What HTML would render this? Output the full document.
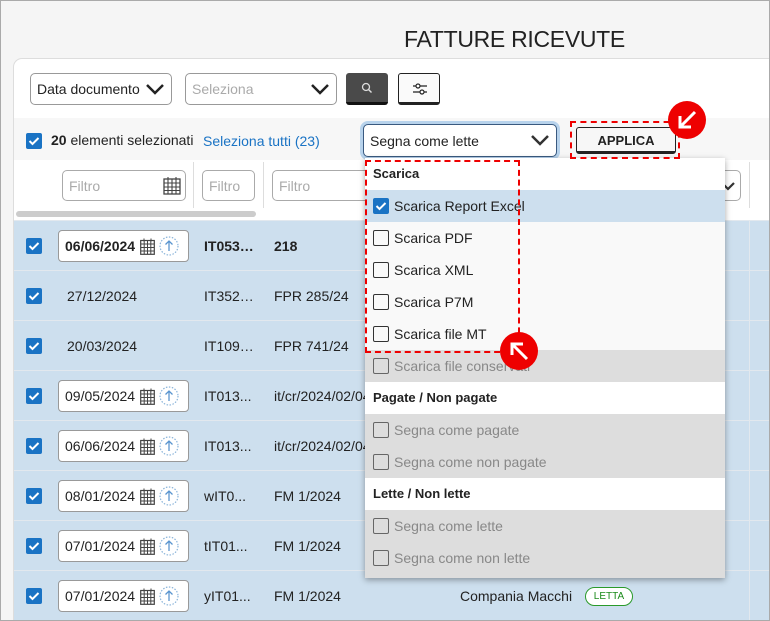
<!DOCTYPE html>
<html style="width:770px;height:621px;overflow:hidden"><head><meta charset="utf-8"><style>
*{box-sizing:border-box;margin:0;padding:0}
body{width:770px;height:621px;overflow:hidden;background:#f5f5f5;font-family:"Liberation Sans",Arial,sans-serif;position:relative;color:#222}
.frame{position:absolute;left:0;top:0;width:770px;height:621px;border:1px solid #aaa;pointer-events:none;z-index:50}
.abs{position:absolute}
.title{left:404px;top:26px;font-size:23px;color:#222;letter-spacing:-0.3px;font-family:"Liberation Sans Narrow","Liberation Sans",sans-serif}
.panel{left:13px;top:58px;width:757px;height:562px;background:#fff;border:1px solid #ddd;border-right:none;border-bottom:none;border-radius:9px 0 0 0;overflow:hidden}
.sel{border:1px solid #999;border-radius:5px;background:#fff;height:32px;font-size:14px;display:flex;align-items:center;padding-left:6px}
.chev{position:absolute;right:6px;top:8px}
.cb{position:absolute;width:16px;height:16px;background:#1a73c4;border-radius:2px}
.cb svg{position:absolute;left:2px;top:3px}
.ub{position:absolute;width:16px;height:16px;border:1.6px solid #333;border-radius:2px;background:transparent}
.row{position:absolute;left:14px;width:756px;height:50px;background:#cddfee;border-top:1px solid #e2e8ee}
.dbox{position:absolute;left:44px;top:9px;width:131px;height:32px;background:#fff;border:1px solid #999;border-radius:4px;font-size:14px;padding:7px 0 0 6px}
.t{position:absolute;font-size:14px;top:17px}
.menu{left:365px;top:158px;width:360px;height:420px;background:#f9f9f9;box-shadow:0 2px 6px rgba(0,0,0,.35);z-index:10}
.mi{position:absolute;left:0;width:360px;height:32px;font-size:14px}
.mi span{position:absolute;left:29px;top:8px}
.mi .ub,.mi .cb{left:8px;top:8px}
.hd{background:#fff;font-weight:bold;font-size:13px}
.hd span{left:8px}
.dis{background:#dddddd;color:#888}
.dis .ub{border-color:#666}
.red{position:absolute;border:2.5px dashed #e00;z-index:20}
.circ{position:absolute;width:38px;height:38px;border-radius:50%;background:#e00;z-index:21}
</style></head><body>
<div class="frame"></div>
<div class="abs title">FATTURE RICEVUTE</div>
<div class="abs panel"></div>
<div class="abs sel" style="left:30px;top:73px;width:142px">Data documento<svg class="chev" width="20" height="14" viewBox="0 0 20 14"><path d="M2 3l8 8 8-8" fill="none" stroke="#222" stroke-width="2.5"/></svg></div>
<div class="abs sel" style="left:185px;top:73px;width:152px;color:#aaa">Seleziona<svg class="chev" width="20" height="14" viewBox="0 0 20 14"><path d="M2 3l8 8 8-8" fill="none" stroke="#222" stroke-width="2.5"/></svg></div>
<div class="abs" style="left:346px;top:73px;width:42px;height:32px;background:#4a4a4a;border-radius:3px;border-bottom:3px solid #111"><svg style="position:absolute;left:15px;top:9px" width="12" height="12" viewBox="0 0 12 12"><circle cx="5" cy="5" r="3.5" fill="none" stroke="#ddd" stroke-width="1.3"/><path d="M7.5 7.5l3 3" stroke="#ddd" stroke-width="1.4"/></svg></div>
<div class="abs" style="left:398px;top:73px;width:42px;height:32px;background:#fafafa;border:1px solid #222;border-radius:3px;border-bottom:3px solid #222"><svg style="position:absolute;left:13px;top:6px" width="16" height="18" viewBox="0 0 16 18"><path d="M1 6h14M1 12h14" stroke="#222" stroke-width="1.2"/><rect x="4" y="4" width="4" height="4" rx="2" fill="#fff" stroke="#222" stroke-width="1.2"/><rect x="8" y="10" width="4" height="4" rx="2" fill="#fff" stroke="#222" stroke-width="1.2"/></svg></div>
<div class="abs" style="left:14px;top:118px;width:756px;height:42px;background:#f7f7f7"></div>
<div class="cb" style="left:26px;top:133px"><svg width="12" height="10" viewBox="0 0 12 10"><path d="M1.5 5l3 3 6-6" fill="none" stroke="#fff" stroke-width="2"/></svg></div>
<div class="abs" style="left:51px;top:132px;font-size:14px"><b>20</b> elementi selezionati</div>
<div class="abs" style="left:203px;top:133px;font-size:14px;color:#1a73c4">Seleziona tutti (23)</div>
<div class="abs sel" style="left:363px;top:124px;width:194px;height:33px;border-color:#3a5a80;box-shadow:0 0 0 3px #b8d3ec">Segna come lette<svg class="chev" width="20" height="14" viewBox="0 0 20 14"><path d="M2 3l8 8 8-8" fill="none" stroke="#333" stroke-width="2.5"/></svg></div>
<div class="abs" style="left:576px;top:127px;width:100px;height:27px;background:#f7f7f7;border:1px solid #222;border-bottom:3px solid #222;border-radius:3px;font-size:13px;font-weight:bold;text-align:center;padding-top:5px">APPLICA</div>
<div class="abs" style="left:14px;top:160px;width:756px;height:60px;background:#fff"></div>
<div class="abs sel" style="left:62px;top:170px;width:124px;height:31px;color:#aaa;border-color:#aaa">Filtro<svg style="position:absolute;right:4px;top:5px" width="18" height="19" viewBox="0 0 18 19"><rect x="1" y="3" width="16" height="15" fill="none" stroke="#444" stroke-width="1.3"/><path d="M1 7h16M1 11h16M1 14.5h16M5 3v15M9 3v15M13 3v15M5 1v3M13 1v3" stroke="#444" stroke-width="1.1"/></svg></div>
<div class="abs" style="left:193px;top:162px;width:1px;height:46px;background:#ddd"></div>
<div class="abs sel" style="left:202px;top:170px;width:53px;height:31px;color:#aaa;border-color:#aaa">Filtro</div>
<div class="abs" style="left:263px;top:162px;width:1px;height:46px;background:#ddd"></div>
<div class="abs sel" style="left:272px;top:170px;width:100px;height:31px;color:#aaa;border-color:#aaa">Filtro</div>
<div class="abs" style="left:720px;top:170px;width:21px;height:31px;border:1px solid #aaa;border-left:none;border-radius:0 5px 5px 0"><svg style="position:absolute;left:0;top:9px" width="16" height="12" viewBox="0 0 16 12"><path d="M2 3l6 6 6-6" fill="none" stroke="#333" stroke-width="2.2"/></svg></div>
<div class="abs" style="left:749px;top:162px;width:1px;height:46px;background:#ddd"></div>
<div class="abs" style="left:16px;top:211px;width:240px;height:6px;background:#ccc;border-radius:3px"></div>
<div id="rows"></div>
<script>
var cal='<svg width="15" height="17" viewBox="0 0 15 17" style="position:absolute;left:81px;top:7px"><rect x="0.7" y="2.5" width="13.6" height="13.8" fill="none" stroke="#444" stroke-width="1.2"/><path d="M.7 6h13.6M.7 9.5h13.6M.7 13h13.6M4.2 2.5v14M7.5 2.5v14M10.8 2.5v14M4 .5v3M11 .5v3" stroke="#444" stroke-width="1"/></svg><svg width="20" height="20" viewBox="0 0 20 20" style="position:absolute;left:100px;top:5px"><circle cx="10" cy="10" r="9" fill="none" stroke="#8ab4da" stroke-width="1.2" stroke-dasharray="1.5 1.5"/><path d="M10 15V5M6.5 8.5L10 5l3.5 3.5" fill="none" stroke="#5a95cf" stroke-width="1.3"/></svg>';
var d=[["06/06/2024",1,"IT053\u2026","218",1],["27/12/2024",0,"IT352\u2026","FPR 285/24"],["20/03/2024",0,"IT109\u2026","FPR 741/24"],["09/05/2024",1,"IT013...","it/cr/2024/02/04"],["06/06/2024",1,"IT013...","it/cr/2024/02/04"],["08/01/2024",1,"wIT0...","FM 1/2024"],["07/01/2024",1,"tIT01...","FM 1/2024"],["07/01/2024",1,"yIT01...","FM 1/2024"]];
var h='';
d.forEach(function(r,i){var y=220+i*50;var b=r[4]?'font-weight:bold;':'';var hh=(i==7)?51:50;
h+='<div class="row" style="top:'+y+'px;height:'+hh+'px"><div class="cb" style="left:12px;top:17px"><svg width="12" height="10" viewBox="0 0 12 10"><path d="M1.5 5l3 3 6-6" fill="none" stroke="#fff" stroke-width="2"/></svg></div>';
if(r[1])h+='<div class="dbox" style="'+b+'">'+r[0]+cal+'</div>';else h+='<div class="t" style="left:53px">'+r[0]+'</div>';
h+='<div class="t" style="left:190px;'+b+'">'+r[2]+'</div><div class="t" style="left:260px;'+b+'">'+r[3]+'</div><div class="abs" style="left:735px;top:0;width:1px;height:50px;background:#e2e8ee"></div>';
if(i==7)h+='<div class="t" style="left:446px">Compania Macchi</div><div class="abs" style="left:571px;top:16px;width:48px;height:19px;border:1px solid #2a9a2a;border-radius:10px;font-size:10px;color:#1a8a1a;text-align:center;padding-top:3px;background:#fff">LETTA</div>';
h+='</div>';});
document.getElementById('rows').innerHTML=h;
</script>
<div class="abs menu">
<div class="mi hd" style="top:0"><span>Scarica</span></div>
<div class="mi" style="top:32px;background:#cddfee"><div class="cb"><svg width="12" height="10" viewBox="0 0 12 10"><path d="M1.5 5l3 3 6-6" fill="none" stroke="#fff" stroke-width="2"/></svg></div><span>Scarica Report Excel</span></div>
<div class="mi" style="top:64px"><div class="ub"></div><span>Scarica PDF</span></div>
<div class="mi" style="top:96px"><div class="ub"></div><span>Scarica XML</span></div>
<div class="mi" style="top:128px"><div class="ub"></div><span>Scarica P7M</span></div>
<div class="mi" style="top:160px"><div class="ub"></div><span>Scarica file MT</span></div>
<div class="mi dis" style="top:192px"><div class="ub"></div><span>Scarica file conservati</span></div>
<div class="mi hd" style="top:224px"><span>Pagate / Non pagate</span></div>
<div class="mi dis" style="top:256px"><div class="ub"></div><span>Segna come pagate</span></div>
<div class="mi dis" style="top:288px"><div class="ub"></div><span>Segna come non pagate</span></div>
<div class="mi hd" style="top:320px"><span>Lette / Non lette</span></div>
<div class="mi dis" style="top:352px;height:36px"><div class="ub"></div><span>Segna come lette</span></div>
<div class="mi dis" style="top:384px;height:36px"><div class="ub"></div><span>Segna come non lette</span></div>
</div>
<div class="red" style="left:365px;top:160px;width:155px;height:193px"></div>
<div class="red" style="left:570px;top:121px;width:110px;height:38px"></div>
<div class="circ" style="left:668px;top:101px"><svg width="38" height="38" viewBox="0 0 38 38"><path d="M27 11L12 26M12 15v11h11" fill="none" stroke="#fff" stroke-width="3"/></svg></div>
<div class="circ" style="left:500px;top:332px"><svg width="38" height="38" viewBox="0 0 38 38"><path d="M27 27L12 12M12 23V12h11" fill="none" stroke="#fff" stroke-width="3"/></svg></div>
</body></html>
